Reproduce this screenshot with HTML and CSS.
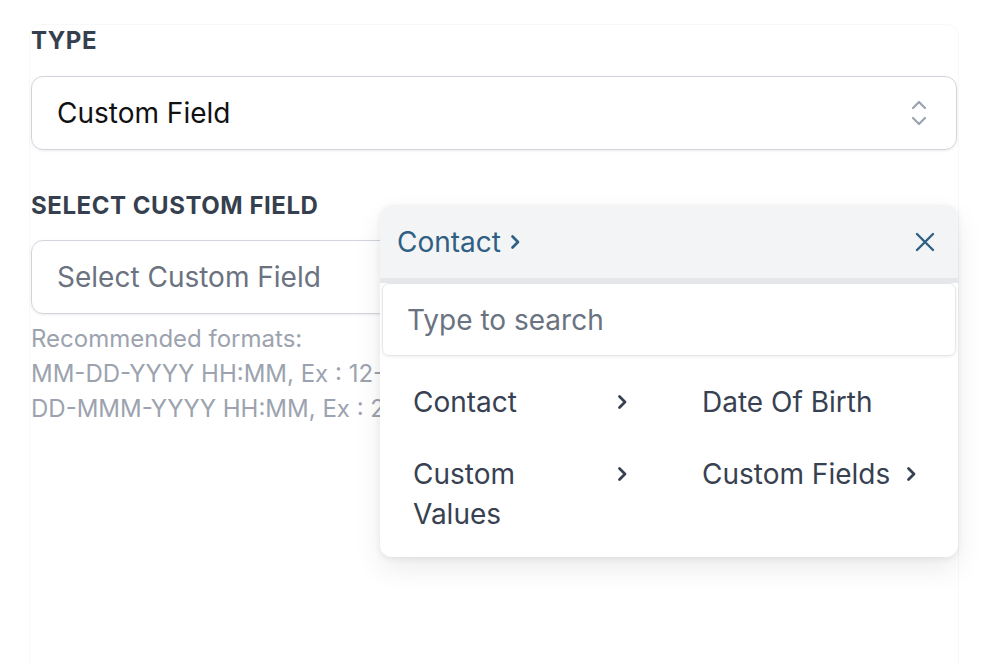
FILE: index.html
```html
<!DOCTYPE html>
<html>
<head>
<meta charset="utf-8">
<link rel="stylesheet" href="styles.css">
</head>
<body>
<div class="panel">
  <div class="field-label">TYPE</div>
  <div class="select">
    <span class="select-value">Custom Field</span>
    <svg class="updown" width="18" height="28" viewBox="0 0 18 28">
      <path d="M3 9l6-6 6 6" />
      <path d="M3 19l6 6 6-6" />
    </svg>
  </div>

  <div class="field-label second">SELECT CUSTOM FIELD</div>
  <div class="input">Select Custom Field</div>
  <div class="help">
    Recommended formats:<br>
    MM-DD-YYYY HH:MM, Ex : 12-31-2020 10:00<br>
    DD-MMM-YYYY HH:MM, Ex : 24-Dec-2020 10:00
  </div>

  <div class="dropdown">
    <div class="dd-header">
      <span class="crumb">Contact
        <svg class="crumb-chev" width="10" height="16" viewBox="0 0 10 16"><path d="M2.5 2.5l5.5 5.5-5.5 5.5"/></svg>
      </span>
      <svg class="close" width="22" height="22" viewBox="0 0 22 22"><path d="M3 3l16 16M19 3L3 19"/></svg>
    </div>
    <div class="dd-search">Type to search</div>
    <div class="dd-grid">
      <div class="dd-item"><span class="dd-text">Contact</span><svg class="chev" width="10" height="16" viewBox="0 0 10 16"><path d="M2.5 2.5l5.5 5.5-5.5 5.5"/></svg></div>
      <div class="dd-item"><span class="dd-text">Date Of Birth</span></div>
      <div class="dd-item"><span class="dd-text">Custom Values</span><svg class="chev" width="10" height="16" viewBox="0 0 10 16"><path d="M2.5 2.5l5.5 5.5-5.5 5.5"/></svg></div>
      <div class="dd-item"><span class="dd-text">Custom Fields</span><svg class="chev" width="10" height="16" viewBox="0 0 10 16"><path d="M2.5 2.5l5.5 5.5-5.5 5.5"/></svg></div>
    </div>
  </div>
</div>
</body>
</html>
```

FILE: styles.css
```css
* { box-sizing: border-box; }
html, body { margin: 0; padding: 0; background: #ffffff; }
body {
  font-family: Inter, "Noto Sans", "Liberation Sans", sans-serif;
  width: 1002px;
  height: 664px;
  overflow: hidden;
}
.panel {
  position: relative;
  margin: 24px 0 0 29px;
  width: 930px;
  height: 640px;
  border: 1px solid #f8f8f9;
  border-bottom: none;
  border-radius: 12px 12px 0 0;
  padding: 2px 1px 0;
}
.field-label {
  font-size: 24px;
  line-height: 28px;
  font-weight: 700;
  color: #363f4e;
  letter-spacing: 0.55px;
}
.field-label.second { margin-top: 42px; }
.select, .input {
  margin-top: 21px;
  height: 74px;
  border: 1px solid #d1d5db;
  border-radius: 12px;
  box-shadow: 0 1px 3px rgba(0,0,0,0.08);
  display: flex;
  align-items: center;
  justify-content: space-between;
  padding: 0 28px 0 25px;
  font-size: 28px;
}
.input { margin-top: 20px; color: #6b7280; }
.select-value { color: #111111; }
.updown path {
  fill: none;
  stroke: #9ca3af;
  stroke-width: 2.2;
  stroke-linecap: round;
  stroke-linejoin: round;
}
.help {
  margin-top: 7px;
  font-size: 24px;
  line-height: 35px;
  color: #9ca3af;
  white-space: nowrap;
}
.dropdown {
  position: absolute;
  left: 350px;
  top: 180px;
  width: 578px;
  height: 352px;
  background: #ffffff;
  border-radius: 12px;
  overflow: hidden;
  box-shadow: 0 12px 28px rgba(0,0,0,0.08), 0 2px 6px rgba(0,0,0,0.07);
}
.dd-header {
  height: 78px;
  background: #f3f4f6;
  border-bottom: 5px solid #e6e7ea;
  display: flex;
  align-items: center;
  justify-content: space-between;
  padding: 0 22px 0 17px;
}
.crumb {
  font-size: 28px;
  color: #2f5f82;
  display: flex;
  align-items: center;
  gap: 9px;
}
.crumb-chev path, .close path {
  fill: none;
  stroke: #2f5f82;
  stroke-width: 2.7;
  stroke-linecap: round;
  stroke-linejoin: round;
}
.close path { stroke-width: 2.4; }
.dd-search {
  margin: 0 2px;
  height: 73px;
  border: 1px solid #e5e7eb;
  border-radius: 7px;
  box-shadow: 0 1px 3px rgba(0,0,0,0.07);
  display: flex;
  align-items: center;
  padding-left: 24px;
  font-size: 28px;
  color: #6b7280;
}
.dd-grid {
  display: grid;
  grid-template-columns: 1fr 1fr;
  padding-top: 10px;
}
.dd-item {
  display: flex;
  justify-content: space-between;
  align-items: flex-start;
  gap: 14px;
  padding: 16px 42px 16px 33px;
  font-size: 28px;
  line-height: 40px;
  color: #374151;
}
.chev { flex: none; margin-top: 12px; }
.chev path {
  fill: none;
  stroke: #374151;
  stroke-width: 2.8;
  stroke-linecap: round;
  stroke-linejoin: round;
}
```
